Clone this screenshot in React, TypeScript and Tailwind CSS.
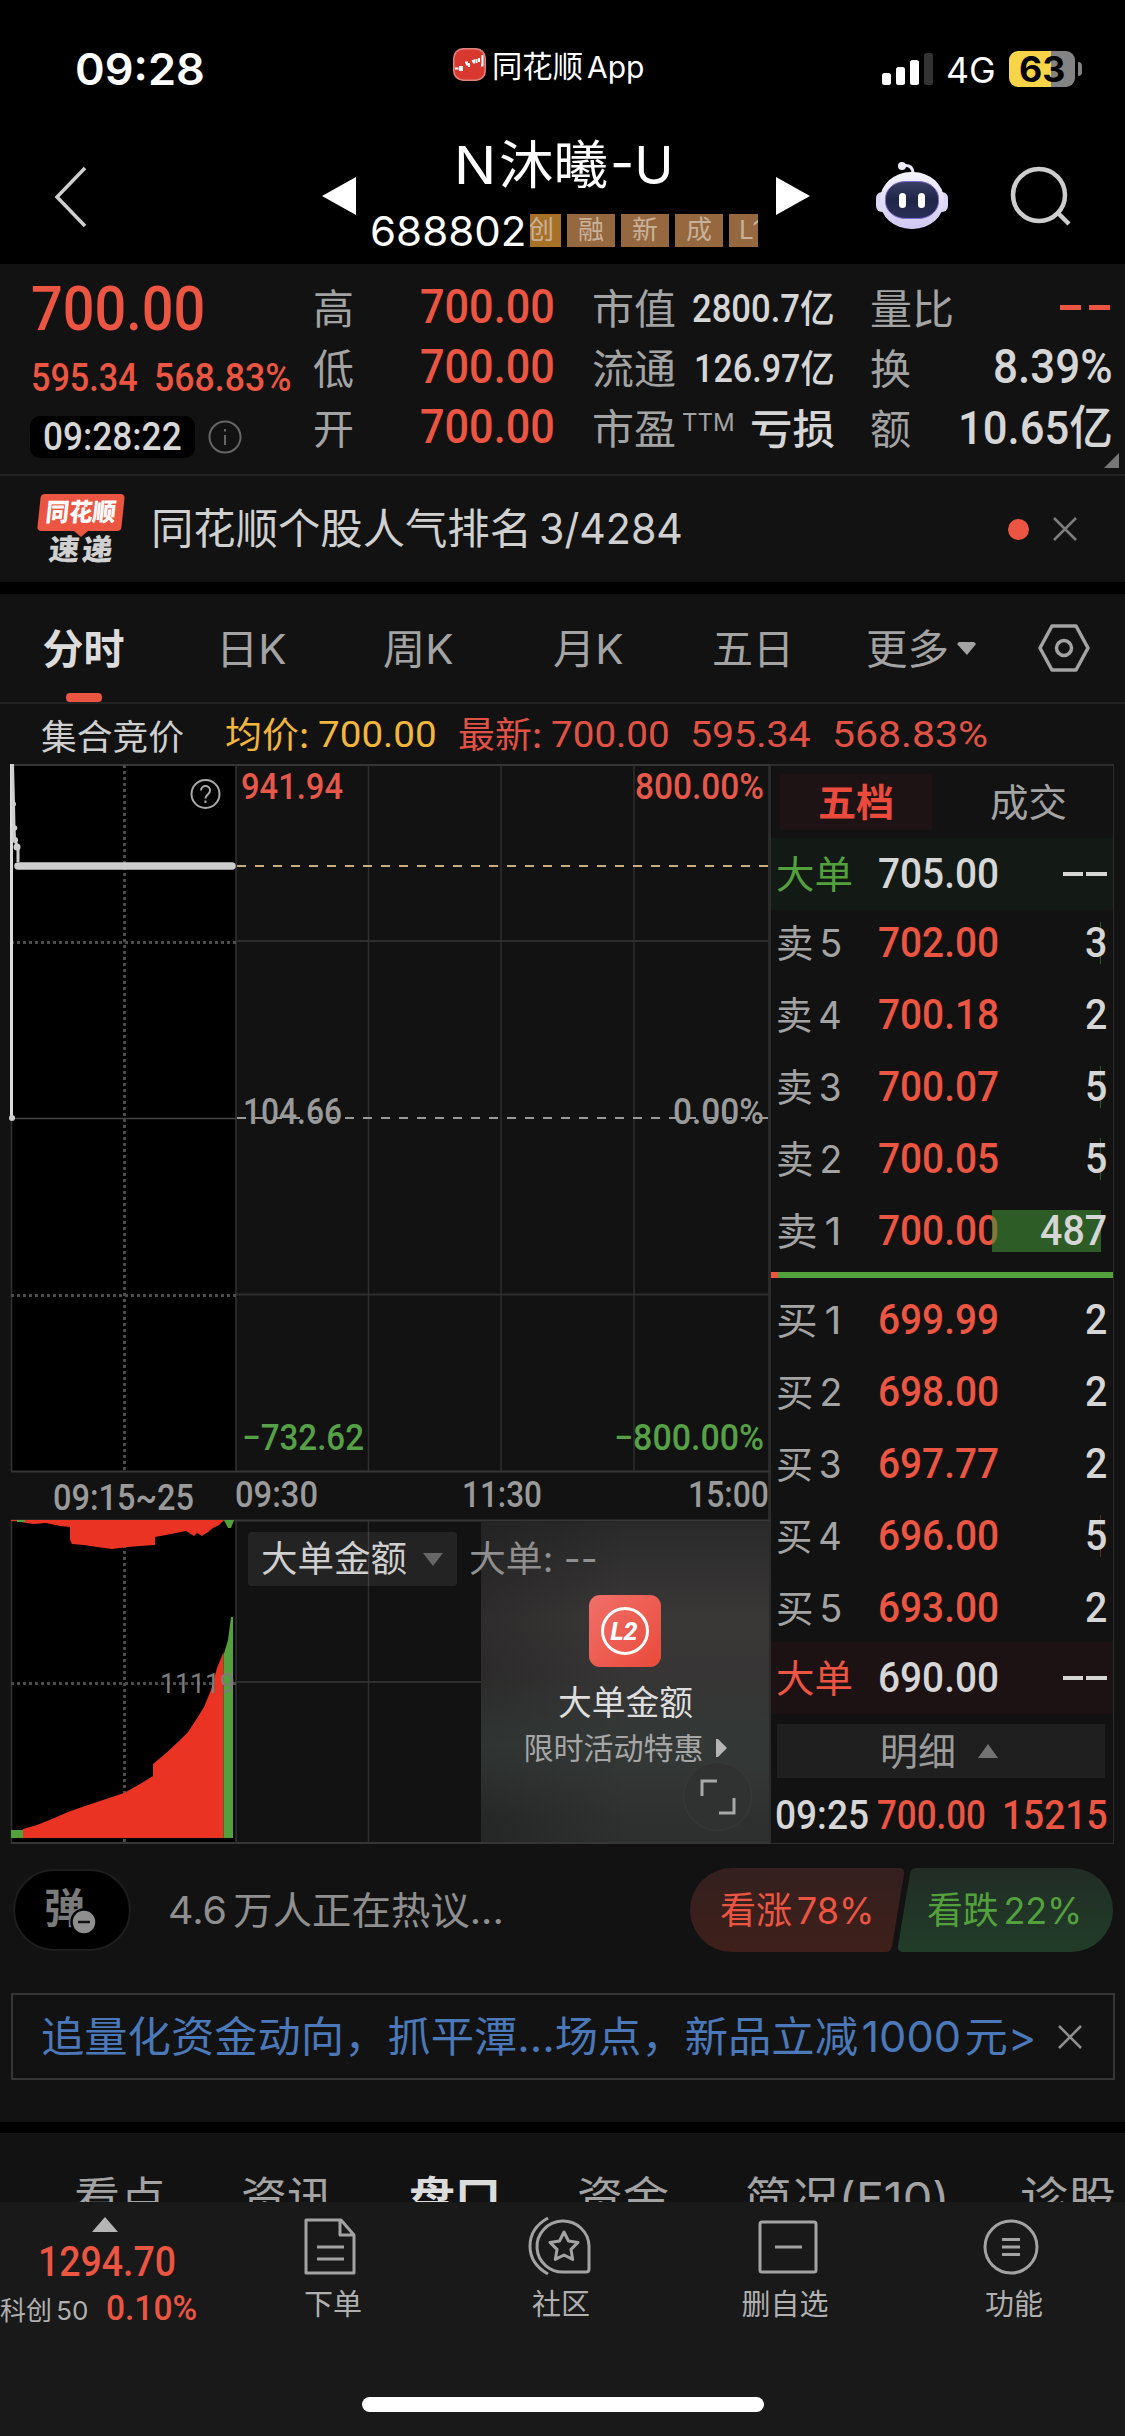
import { useLayoutEffect, useRef, useState, type ReactNode } from "react";

const NUM = "font-['Roboto','Noto_Sans_CJK_SC',sans-serif]";

// Squeezes or stretches a single line of text to an exact width
function Fit({ w, className = "", children }: { w: number; className?: string; children: ReactNode }) {
    const ref = useRef<HTMLSpanElement>(null);
    const [scale, setScale] = useState(1);

    useLayoutEffect(() => {
        if (ref.current) setScale(w / ref.current.offsetWidth);
    }, [w, children]);

    return (
        <span className={`block shrink-0 whitespace-nowrap leading-none ${className}`} style={{ width: w }}>
            <span ref={ref} className="inline-block origin-left" style={{ transform: `scaleX(${scale})` }}>
                {children}
            </span>
        </span>
    );
}

function StatusBar() {
    return (
        <div className="flex h-[136px] items-start">
            <Fit w={130} className="ml-[75px] mt-[47px] text-[44px] font-semibold">09:28</Fit>
            <svg className="ml-[248px] mt-12" width="33" height="33" viewBox="0 0 33 33">
                <rect width="33" height="33" rx="10" fill="#e0837d" />
                <rect x="1.5" y="1.5" width="30" height="30" rx="9" fill="#d8382e" />
                <path d="M2 20.500h3.500M7 18v4h2v-4M12 14.500h2v3M16 15v4M19 13.500l2-1v3M23.500 11v4M26 10v4M29.500 7v10.500h-1.500" fill="none" stroke="#fff" strokeWidth="2" />
            </svg>
            <Fit w={91} className="ml-1.5 mt-[51px] text-[30px]">同花顺</Fit>
            <Fit w={57} className="ml-1 mt-[52px] text-[30px]">App</Fit>
            <svg className="ml-[238px] mt-[53px]" width="52" height="32" viewBox="0 0 52 32">
                <rect x="0" y="20" width="9" height="12" rx="2.500" fill="#fff" />
                <rect x="14" y="14" width="9" height="18" rx="2.500" fill="#fff" />
                <rect x="28" y="7" width="9" height="25" rx="2.500" fill="#fff" />
                <rect x="42" y="0" width="9" height="32" rx="2.500" fill="#333" />
            </svg>
            <Fit w={50} className="ml-3 mt-[53px] text-[35px]">4G</Fit>
            <div className="ml-[13px] mt-[51px] flex h-9 w-[66px] items-center justify-center rounded-[9px] bg-linear-to-r from-[#f8d448] from-63% to-[#838383] to-63% leading-none text-black">
                <Fit w={46} className="text-[35px] font-bold">63</Fit>
            </div>
            <div className="ml-[3px] mt-[62px] h-3.5 w-1 rounded-r-full bg-[#838383]" />
        </div>
    );
}

function Robot() {
    return (
        <svg width="72" height="68" viewBox="0 0 72 68">
            <defs>
                <linearGradient id="shell" x1="0" y1="0" x2="0" y2="1">
                    <stop offset="0" stopColor="#f6f5ff" />
                    <stop offset="1" stopColor="#cfc9f1" />
                </linearGradient>
                <linearGradient id="visor" x1="0" y1="0" x2="0" y2="1">
                    <stop offset="0" stopColor="#3a4063" />
                    <stop offset="0.500" stopColor="#1f2547" />
                    <stop offset="1" stopColor="#2a3158" />
                </linearGradient>
            </defs>
            <path d="M26 4c8-2 11 2 11 8" fill="none" stroke="#e9e7fb" strokeWidth="3" />
            <circle cx="26" cy="4" r="4" fill="#eeecfc" />
            <rect x="0" y="30" width="12" height="20" rx="6" fill="#d9d8f5" />
            <rect x="60" y="30" width="12" height="20" rx="6" fill="#d9d8f5" />
            <rect x="4" y="10" width="64" height="57" rx="31" ry="28" fill="url(#shell)" />
            <rect x="9.500" y="19.500" width="53" height="37" rx="20" ry="17" fill="url(#visor)" stroke="#7a68d6" strokeWidth="1" />
            <rect x="23" y="31" width="7" height="15" rx="3.500" fill="#fff" />
            <rect x="42" y="31" width="7" height="15" rx="3.500" fill="#fff" />
        </svg>
    );
}

function Header() {
    const tags = ["融", "新", "成"];
    return (
        <div className="flex h-32 items-start">
            <svg className="ml-[54px] mt-[30px]" width="34" height="62" viewBox="0 0 34 62">
                <path d="M31 2L3 31l28 29" fill="none" stroke="#cfcfcf" strokeWidth="3.500" />
            </svg>
            <svg className="ml-[234px] mt-[41px]" width="34" height="38" viewBox="0 0 34 38">
                <path d="M34 0v38L0 19z" fill="#fff" />
            </svg>
            <div className="ml-[14px] flex w-[388px] flex-col">
                <div className="mt-px flex h-[58px] items-center pl-[84px] text-[52px]">
                    <Fit w={42}>N</Fit>
                    <Fit w={109} className="ml-[3px]">沐曦</Fit>
                    <Fit w={64} className="ml-0.5">-U</Fit>
                </div>
                <div className="mt-[17px] flex h-9 items-center">
                    <Fit w={156} className="mt-0.5 text-[41px]">688802</Fit>
                    <div className="ml-1 flex w-[228px] gap-1.5 overflow-hidden text-[26px] leading-none text-[#c8b199]">
                        <div className="flex h-[33px] w-[31px] shrink-0 items-center justify-end overflow-hidden bg-[#a87128] pr-[7px]">创</div>
                        {tags.map((t) => (
                            <div key={t} className="flex h-[33px] w-12 shrink-0 items-center justify-center bg-[#96683f]">{t}</div>
                        ))}
                        <div className="flex h-[33px] w-12 shrink-0 items-center bg-[#96683f] pl-2.5">L1</div>
                    </div>
                </div>
            </div>
            <svg className="ml-[18px] mt-[41px]" width="34" height="38" viewBox="0 0 34 38">
                <path d="M0 0v38l34-19z" fill="#fff" />
            </svg>
            <div className="ml-[66px] mt-[26px]">
                <Robot />
            </div>
            <svg className="ml-[62px] mt-7" width="64" height="64" viewBox="0 0 64 64">
                <circle cx="29" cy="31" r="26" fill="none" stroke="#cdcdcd" strokeWidth="4.500" />
                <path d="M48 49l11 11" stroke="#cdcdcd" strokeWidth="4.500" />
            </svg>
        </div>
    );
}

function Quote() {
    return (
        <div className="flex h-[210px] bg-[#121212] text-[#a3a3a3]">
            <div className="ml-[31px] flex w-[264px] flex-col">
                <Fit w={174} className={`mt-[14px] text-[62px] font-medium text-[#eb5541] ${NUM}`}>700.00</Fit>
                <div className={`mt-[19px] flex text-[38px] font-medium text-[#eb5541] ${NUM}`}>
                    <Fit w={107}>595.34</Fit>
                    <Fit w={138} className="ml-4">568.83%</Fit>
                </div>
                <div className="-ml-px mt-[19px] flex items-center">
                    <div className={`flex h-[42px] w-[165px] items-center justify-center rounded-[10px] bg-black text-[38px] font-medium text-[#d6d6d6] ${NUM}`}>
                        <Fit w={139}>09:28:22</Fit>
                    </div>
                    <svg className="ml-3" width="36" height="36" viewBox="0 0 36 36" fill="none" stroke="#666" strokeWidth="2">
                        <circle cx="18" cy="18" r="15.500" />
                        <path d="M18 16v10M18 10v2.500" />
                    </svg>
                </div>
            </div>
            <div className="ml-[18px] mt-[15px] w-[244px]">
                {["高", "低", "开"].map((k) => (
                    <div key={k} className="flex h-[60px] items-center">
                        <Fit w={41} className="text-[41px]">{k}</Fit>
                        <Fit w={135} className={`mb-1 ml-[66px] text-[48px] font-medium text-[#eb5541] ${NUM}`}>700.00</Fit>
                    </div>
                ))}
            </div>
            <div className="ml-[35px] mt-[15px] w-[243px] text-[41px] leading-none">
                <div className="flex h-[60px] items-center justify-between">
                    <Fit w={84}>市值</Fit>
                    <Fit w={143} className={`text-[38px] font-medium text-[#d6d6d6] ${NUM}`}>2800.7亿</Fit>
                </div>
                <div className="flex h-[60px] items-center justify-between">
                    <Fit w={84}>流通</Fit>
                    <Fit w={141} className={`text-[38px] font-medium text-[#d6d6d6] ${NUM}`}>126.97亿</Fit>
                </div>
                <div className="flex h-[60px] items-center">
                    <Fit w={84}>市盈</Fit>
                    <Fit w={53} className="mb-3 ml-1.5 text-[24px]">TTM</Fit>
                    <Fit w={85} className="ml-auto text-[41px] font-medium text-[#d6d6d6]">亏损</Fit>
                </div>
            </div>
            <div className="ml-[35px] mt-[15px] w-[243px] text-[41px] leading-none">
                <div className="flex h-[60px] items-center justify-between">
                    <Fit w={84}>量比</Fit>
                    <svg className="mb-0.5" width="54" height="8" viewBox="0 0 54 8" fill="#eb5541">
                        <rect x="1" y="1" width="21" height="5" />
                        <rect x="30" y="1" width="21" height="5" />
                    </svg>
                </div>
                <div className="flex h-[60px] items-center justify-between">
                    <Fit w={41}>换</Fit>
                    <Fit w={120} className={`mb-1 text-[48px] font-medium text-[#d6d6d6] ${NUM}`}>8.39%</Fit>
                </div>
                <div className="flex h-[60px] items-center justify-between">
                    <Fit w={41}>额</Fit>
                    <Fit w={155} className={`mb-1 text-[47px] font-medium text-[#d6d6d6] ${NUM}`}>10.65亿</Fit>
                </div>
            </div>
            <svg className="-ml-[9px] mt-[189px]" width="15" height="15" viewBox="0 0 15 15">
                <path d="M15 0v15H0z" fill="#777" />
            </svg>
        </div>
    );
}

function NewsBar() {
    return (
        <div className="flex h-[108px] items-center border-t-2 border-[#232323] bg-[#121212]">
            <div className="ml-[37px] flex w-[88px] flex-col items-center">
                <div className="flex h-[37px] w-[84px] -skew-x-6 items-center justify-center rounded-[4px] bg-[#eb5541] text-white">
                    <Fit w={70} className="text-[25px] font-black">同花顺</Fit>
                </div>
                <svg className="-mb-0.5" width="14" height="6" viewBox="0 0 14 6">
                    <path d="M0 0h14L7 6z" fill="#eb5541" />
                </svg>
                <div className="-skew-x-6 text-[#d0d0d0]">
                    <Fit w={64} className="text-[29px] font-black [word-spacing:-0.1em]">速 递</Fit>
                </div>
            </div>
            <Fit w={381} className="ml-[26px] text-[42px] text-[#d0d0d0]">同花顺个股人气排名</Fit>
            <Fit w={144} className="ml-[7px] text-[42px] text-[#d0d0d0]">3/4284</Fit>
            <div className="ml-[325px] size-[21px] rounded-full bg-[#eb5541]" />
            <svg className="ml-6" width="24" height="24" viewBox="0 0 24 24">
                <path d="M1 1l22 22M23 1L1 23" stroke="#7d7d7d" strokeWidth="2.500" />
            </svg>
        </div>
    );
}

function PeriodTabs() {
    return (
        <div className="mt-3 flex h-[110px] items-center border-b-2 border-[#232323] bg-[#121212] text-[41px] leading-none text-[#a3a3a3]">
            <div className="ml-[42px] flex h-full w-[83px] flex-col items-center justify-end text-[#dcdcdc]">
                <Fit w={82} className="mb-[23px] font-bold">分时</Fit>
                <div className="h-[9px] w-9 rounded-[4px] bg-[#eb5541]" />
            </div>
            <Fit w={71} className="ml-[91px] mt-0.5">日K</Fit>
            <Fit w={71} className="ml-24 mt-0.5">周K</Fit>
            <Fit w={71} className="ml-[99px] mt-0.5">月K</Fit>
            <Fit w={82} className="ml-[88px] mt-0.5">五日</Fit>
            <Fit w={83} className="ml-[72px] mt-0.5">更多</Fit>
            <svg className="ml-2" width="19" height="13" viewBox="0 0 19 13">
                <path d="M2 0h15l2 2-9 11L0 2z" fill="#a3a3a3" />
            </svg>
            <svg className="ml-[61px]" width="54" height="48" viewBox="0 0 54 48" fill="none" stroke="#a3a3a3" strokeWidth="3.500">
                <path d="M15 2h24l12 22-12 22H15L3 24z" strokeLinejoin="round" />
                <circle cx="27" cy="24" r="7.500" />
            </svg>
        </div>
    );
}

function PriceLine() {
    return (
        <div className="flex h-[60px] items-center bg-[#121212] pt-0.5 text-[36px] leading-none text-[#e25244]">
            <Fit w={143} className="ml-[41px] mt-1 text-[35px] text-[#cfcfcf]">集合竞价</Fit>
            <Fit w={84} className="ml-[41px] text-[#f2b63c]">均价:</Fit>
            <Fit w={119} className={`ml-[9px] text-[#f2b63c] ${NUM}`}>700.00</Fit>
            <Fit w={84} className="ml-[21px]">最新:</Fit>
            <Fit w={119} className={`ml-[9px] ${NUM}`}>700.00</Fit>
            <Fit w={121} className={`ml-[20px] ${NUM}`}>595.34</Fit>
            <Fit w={156} className={`ml-[21px] ${NUM}`}>568.83%</Fit>
        </div>
    );
}

type LabelProps = { x: number; y: number; w: number; fill: string; children: string };

function AxisLabel({ x, y, w, fill, children }: LabelProps) {
    return (
        <text x={x} y={y} fill={fill} fontSize="36" fontFamily="Roboto, sans-serif" fontWeight="500" textLength={w} lengthAdjust="spacingAndGlyphs">
            {children}
        </text>
    );
}

function Chart() {
    return (
        <div className="relative h-[1080px] w-[770px] shrink-0">
            <svg className="block" width="770" height="1080" viewBox="0 764 770 1080">
                <rect x="11" y="765" width="225" height="706" fill="#000" />
                <rect x="11" y="1521" width="225" height="322" fill="#000" />
                <g stroke="#2e2e2e" strokeWidth="1.500" fill="none">
                    <path d="M11 765H770M11 1471.500H770M11 1520.500H770M11 1843H770" stroke="#363636" strokeWidth="2" />
                    <path d="M11.500 765V1471M11.500 1521V1843M236 765V1471M236 1521V1843M769 765V1843" stroke="#333" />
                    <path d="M368.500 765V1471M501 765V1471M634 765V1471M368.500 1521V1843" />
                    <path d="M236 941H769M236 1294.500H769M236 1682H482" strokeWidth="2" />
                    <path d="M11 1118.500H236" stroke="#444" />
                </g>
                <g stroke="#4c4c4c" strokeWidth="3" strokeDasharray="3 3" fill="none">
                    <path d="M11 942.500H236M11 1295.500H236M11 1683.500H236" />
                    <path d="M124.500 765V1471M124.500 1521V1843" />
                </g>
                <path d="M237 866H768" stroke="#c9ad7c" strokeWidth="2" strokeDasharray="9 9" />
                <path d="M237 1118H768" stroke="#999" strokeWidth="2" strokeDasharray="9 9" />
                <path d="M11.500 764V1118" stroke="#dcdcdc" strokeWidth="3" />
                <path d="M12.500 764L13.500 803L14 828L14.500 838L17 846L18 850L18 862" stroke="#cfcfcf" strokeWidth="3" fill="none" />
                <g fill="#cfcfcf">
                    <circle cx="13.500" cy="804" r="2.500" />
                    <circle cx="14.500" cy="828" r="2.800" />
                    <circle cx="15" cy="840" r="3" />
                    <circle cx="17" cy="847" r="3.500" />
                    <circle cx="12" cy="1118" r="3" />
                </g>
                <path d="M18 866H232" stroke="#cdcdcd" strokeWidth="7.500" strokeLinecap="round" />

                <g fill="none" stroke="#aaa" strokeWidth="2">
                    <circle cx="205.500" cy="794" r="14" />
                    <path d="M201 790.500c0-6 9-6 9 0 0 4-4.500 4-4.500 8M205.500 800.500v2.500" />
                </g>

                <AxisLabel x={241} y={799} w={102} fill="#e8584a">941.94</AxisLabel>
                <AxisLabel x={635} y={799} w={129} fill="#e8584a">800.00%</AxisLabel>
                <AxisLabel x={243} y={1124} w={99} fill="#9a9a9a">104.66</AxisLabel>
                <AxisLabel x={673} y={1124} w={91} fill="#9a9a9a">0.00%</AxisLabel>
                <AxisLabel x={242} y={1450} w={122} fill="#56a045">−732.62</AxisLabel>
                <AxisLabel x={614} y={1450} w={150} fill="#56a045">−800.00%</AxisLabel>
                <AxisLabel x={53} y={1510} w={141} fill="#9a9a9a">09:15~25</AxisLabel>
                <AxisLabel x={235} y={1507} w={83} fill="#9a9a9a">09:30</AxisLabel>
                <AxisLabel x={462} y={1507} w={80} fill="#9a9a9a">11:30</AxisLabel>
                <AxisLabel x={688} y={1507} w={81} fill="#9a9a9a">15:00</AxisLabel>

                {/* auction volume */}
                <path d="M11 1520H224L219 1525L213 1528L208 1532L202 1536L197 1533L194 1536L186 1531L176 1533L166 1535L155 1537V1545L140 1546L128 1547L112 1549L97 1547L84 1545L72 1544L70 1540V1527L60 1526L46 1523L34 1524L26 1523L18 1521H11z" fill="#ea3323" />
                <path d="M17 1520h8v2h-8zM224 1520h10l-3 8h-3z" fill="#53a13c" />
                <path d="M23 1838V1829L37 1825L52 1819L68 1812L85 1806L100 1801L124 1793L140 1784L153 1776V1764L165 1754L178 1742L188 1732L194 1723L204 1707L211 1690L217 1668L223.500 1652V1838z" fill="#ea3323" />
                <path d="M11 1838v-8h12v8zM223.500 1838V1655L228 1640L231 1617H233V1838z" fill="#53a13c" />
                <text x="160" y="1693" fill="#7c7c7c" fontSize="28" fontFamily="Roboto, sans-serif" textLength="75" lengthAdjust="spacingAndGlyphs">11119</text>
            </svg>

            <div className="absolute left-[481px] top-[758px] flex h-[320px] w-[288px] flex-col items-center bg-linear-to-b from-[#2a2a2a] via-[#3a3737] via-30% to-[#2e2f2f]">
                <div className="absolute inset-0 bg-linear-to-r from-[#121212]/30 to-transparent to-50%" />
                <div className="absolute inset-x-0 bottom-6 top-[150px] bg-linear-to-b from-transparent via-[#333d39]/60 to-transparent" />
                <svg className="relative mt-[73px]" width="72" height="72" viewBox="0 0 72 72">
                    <defs>
                        <linearGradient id="l2" x1="0" y1="0" x2="1" y2="1">
                            <stop offset="0" stopColor="#f0706a" />
                            <stop offset="1" stopColor="#ea4a3a" />
                        </linearGradient>
                    </defs>
                    <rect width="72" height="72" rx="11" fill="url(#l2)" />
                    <circle cx="36" cy="36" r="22.500" fill="none" stroke="#fff" strokeWidth="3" />
                    <text x="35" y="45" textAnchor="middle" fill="#fff" fontSize="25" fontWeight="800" fontStyle="italic" fontFamily="Roboto, sans-serif">L2</text>
                </svg>
                <Fit w={135} className="relative mt-[19px] text-[34px] text-[#dedede]">大单金额</Fit>
                <div className="relative mt-[13px] flex items-center">
                    <Fit w={180} className="text-[30px] text-[#a6a6a6]">限时活动特惠</Fit>
                    <svg className="ml-3" width="11" height="18" viewBox="0 0 11 18">
                        <path d="M0 0h2l9 9-9 9H0z" fill="#b5b5b5" />
                    </svg>
                </div>
                <div className="absolute left-[202px] top-[240px] flex size-[69px] items-center justify-center rounded-full border border-[#3a3a3a] bg-[#303131]">
                    <svg width="36" height="36" viewBox="0 0 36 36" fill="none" stroke="#a8a8a8" strokeWidth="3">
                        <path d="M2 17V2h15M34 19v15H19" />
                    </svg>
                </div>
            </div>
            <div className="absolute left-[248px] top-[768px] flex h-[54px] items-center text-[36px]">
                <div className="flex h-full w-[209px] items-center rounded-[4px] bg-white/7 pl-[13px] text-[#cfcfcf]">
                    <Fit w={146}>大单金额</Fit>
                    <svg className="ml-4" width="20" height="13" viewBox="0 0 20 13">
                        <path d="M0 0h20L10 13z" fill="#666" />
                    </svg>
                </div>
                <Fit w={129} className="ml-3 text-[#8f8f8f]">大单: --</Fit>
            </div>
        </div>
    );
}

// bar is the depth bar's width in px
type Level = { name: string; price: string; qty: string; bar: number };

const sells: Level[] = [
    { name: "卖 5", price: "702.00", qty: "3", bar: 1 },
    { name: "卖 4", price: "700.18", qty: "2", bar: 0 },
    { name: "卖 3", price: "700.07", qty: "5", bar: 1 },
    { name: "卖 2", price: "700.05", qty: "5", bar: 1 },
    { name: "卖 1", price: "700.00", qty: "487", bar: 109 },
];

const buys: Level[] = [
    { name: "买 1", price: "699.99", qty: "2", bar: 0 },
    { name: "买 2", price: "698.00", qty: "2", bar: 0 },
    { name: "买 3", price: "697.77", qty: "2", bar: 0 },
    { name: "买 4", price: "696.00", qty: "5", bar: 1 },
    { name: "买 5", price: "693.00", qty: "2", bar: 0 },
];

function LevelRow({ level, barClass }: { level: Level; barClass: string }) {
    return (
        <div className="relative flex h-[72px] items-center">
            <Fit w={66} className="ml-[5px] text-[38px] text-[#a3a3a3] [word-spacing:-0.12em]">{level.name}</Fit>
            <Fit w={121} className={`ml-9 text-[42px] font-medium text-[#eb5541] ${NUM}`}>{level.price}</Fit>
            <div className={`absolute right-[12px] top-[15px] h-[42px] ${barClass}`} style={{ width: level.bar }} />
            <Fit w={level.qty.length * 22.5} className={`relative ml-auto mr-1.5 text-[42px] font-medium text-[#d6d6d6] ${NUM}`}>{level.qty}</Fit>
        </div>
    );
}

function BigOrderRow({ className, price }: { className: string; price: string }) {
    return (
        <div className={`flex h-[72px] items-center ${className}`}>
            <Fit w={77} className="ml-[5px] text-[38px]">大单</Fit>
            <Fit w={121} className={`ml-[25px] text-[42px] font-medium text-[#d6d6d6] ${NUM}`}>{price}</Fit>
            <svg className="ml-auto mr-1.5" width="44" height="4" viewBox="0 0 44 4" fill="#d6d6d6">
                <rect width="20" height="4" />
                <rect x="23" width="21" height="4" />
            </svg>
        </div>
    );
}

function OrderBook() {
    return (
        <div className="h-[1080px] w-[344px] border border-t-2 border-[#2c2c2c]">
            <div className="flex h-[72px] items-center pl-[9px] leading-none">
                <div className="flex h-14 w-[152px] items-center justify-center bg-[#1e1314] text-[#eb4a3c]">
                    <Fit w={76} className="mb-px text-[38px] font-bold">五档</Fit>
                </div>
                <Fit w={77} className="mb-px ml-[58px] text-[38px] text-[#a3a3a3]">成交</Fit>
            </div>
            <BigOrderRow className="bg-[#131a16] text-[#53a13c]" price="705.00" />
            <div className="-mt-[3px] h-[365px]">
                {sells.map((l) => <LevelRow key={l.name} level={l} barClass="bg-[#418d33]/60" />)}
            </div>
            <div className="flex h-1.5 bg-[#53a13c]">
                <div className="h-full w-[7px] bg-[#eb5541]" />
            </div>
            <div className="mt-1.5 h-[358px]">
                {buys.map((l) => <LevelRow key={l.name} level={l} barClass="bg-[#a03a34]/60" />)}
            </div>
            <BigOrderRow className="bg-[#1d1213] text-[#eb5541]" price="690.00" />
            <div className="ml-1.5 mt-2.5 flex h-[54px] w-[328px] items-center bg-[#1f1f1f] pl-[103px] text-[#9a9a9a]">
                <Fit w={76} className="text-[38px]">明细</Fit>
                <svg className="ml-[22px]" width="20" height="14" viewBox="0 0 20 14">
                    <path d="M10 0l10 14H0z" fill="#737373" />
                </svg>
            </div>
            <div className={`flex h-[68px] items-center pt-1.5 text-[41px] font-medium text-[#eb5541] ${NUM}`}>
                <Fit w={94} className="ml-1 text-[#d6d6d6]">09:25</Fit>
                <Fit w={109} className="ml-2">700.00</Fit>
                <Fit w={106} className="ml-[16px]">15215</Fit>
            </div>
        </div>
    );
}

function Discuss() {
    return (
        <div className="flex h-[149px] items-start">
            <div className="relative ml-[13px] mt-[25px] flex h-[82px] w-[118px] items-center rounded-full border-2 border-[#1d1d1d] bg-black pl-[29px]">
                <span className="pb-1 text-[41px] font-bold leading-none text-[#7a7a7a]">弹</span>
                <svg className="absolute left-[55px] top-[37px]" width="28" height="28" viewBox="0 0 28 28">
                    <circle cx="14" cy="14" r="12.500" fill="#8f8f8f" stroke="#000" strokeWidth="2.500" />
                    <path d="M8 14h12" stroke="#111" strokeWidth="2.500" />
                </svg>
            </div>
            <Fit w={336} className="ml-[37px] mt-[47px] text-[38px] text-[#8f8f8f] [word-spacing:-0.12em]">4.6 万人正在热议...</Fit>
            <div className="relative ml-[186px] mt-6 h-[84px] w-[424px]">
                <svg className="block" width="424" height="84" viewBox="0 0 424 84">
                    <defs>
                        <linearGradient id="up" x1="0" y1="0" x2="0" y2="1">
                            <stop offset="0" stopColor="#33201f" />
                            <stop offset="1" stopColor="#3f1f1a" />
                        </linearGradient>
                        <linearGradient id="down" x1="0" y1="0" x2="0" y2="1">
                            <stop offset="0" stopColor="#212c25" />
                            <stop offset="1" stopColor="#213d29" />
                        </linearGradient>
                    </defs>
                    <path d="M42 0H209q6 0 5 6L202 78q-1 6-7 6H42A42 42 0 0 1 42 0z" fill="url(#up)" />
                    <path d="M226 0H381A42 42 0 0 1 381 84H213q-6 0-5-6L220 6q1-6 6-6z" fill="url(#down)" />
                </svg>
                <div className="absolute inset-0 flex items-center pl-[30px] text-[37px] [word-spacing:-0.15em]">
                    <Fit w={155} className="text-[#eb5541]">看涨 78%</Fit>
                    <Fit w={155} className="ml-[52px] text-[#53a13c]">看跌 22%</Fit>
                </div>
            </div>
        </div>
    );
}

function Promo() {
    return (
        <div className="mx-[11px] flex h-[87px] w-[1104px] items-center border-2 border-[#363636] text-[42px] text-[#4a78b8]">
            <Fit w={995} className="ml-[28px] [word-spacing:-0.2em]">追量化资金动向，抓平潭...场点，新品立减 1000 元&gt;</Fit>
            <svg className="ml-[22px]" width="24" height="24" viewBox="0 0 24 24">
                <path d="M1 1l22 22M23 1L1 23" stroke="#8f8f8f" strokeWidth="2.500" />
            </svg>
        </div>
    );
}

function SectionTabs() {
    return (
        <div className="mt-[11px] flex h-[69px] items-start overflow-hidden bg-[#121212] pt-[43px] text-[43px] text-[#a3a3a3]">
            <Fit w={92} className="ml-[74px]">看点</Fit>
            <Fit w={92} className="ml-[75px]">资讯</Fit>
            <Fit w={92} className="ml-[76px] font-bold text-[#dcdcdc]">盘口</Fit>
            <Fit w={92} className="ml-[76px]">资金</Fit>
            <Fit w={204} className="ml-[76px]">简况(F10)</Fit>
            <Fit w={96} className="ml-[71px]">诊股</Fit>
        </div>
    );
}

function BottomBar() {
    const stroke = { fill: "none", stroke: "#a3a3a3", strokeWidth: 3 };
    return (
        <div className="flex h-[234px] flex-col items-center bg-[#191919] text-[#b0b0b0]">
            <div className="flex h-[195px] w-full items-start">
                <div className="flex w-[219px] shrink-0 flex-col">
                    <svg className="ml-[92px] mt-[15px]" width="26" height="15" viewBox="0 0 26 15">
                        <path d="M13 0l13 15H0z" fill="#b5b5b5" />
                    </svg>
                    <Fit w={138} className={`ml-[38px] mt-[9px] text-[42px] font-medium text-[#eb5541] ${NUM}`}>1294.70</Fit>
                    <div className="mt-2 flex items-center">
                        <Fit w={88} className="mt-1 text-[26px] [word-spacing:-0.12em]">科创 50</Fit>
                        <Fit w={91} className={`ml-[18px] text-[35px] font-medium text-[#eb5541] ${NUM}`}>0.10%</Fit>
                    </div>
                </div>
                <div className="flex w-[228px] shrink-0 flex-col items-center pt-[14px] text-[29px] leading-none">
                    <svg className="mr-1" width="56" height="60" viewBox="0 0 56 60" {...stroke}>
                        <path d="M3 4h35l13 15v38H3zM37 4v15h14M14 31h27M14 43h27" strokeLinejoin="round" />
                    </svg>
                    <span className="mt-[14px]">下单</span>
                </div>
                <div className="flex w-[228px] shrink-0 flex-col items-center pt-[14px] text-[29px] leading-none">
                    <svg className="mr-1" width="64" height="60" viewBox="0 0 64 60" {...stroke}>
                        <path d="M38 56A26 25.500 0 1 1 62 30V53q0 3-3 3zM21 2Q3 12 3 30t18 28" strokeLinejoin="round" />
                        <path d="M37 16l4.500 9 9.500 1.400-7 7 1.700 10L37 39l-8.700 4.400L30 33.400l-7-7 9.500-1.400z" strokeLinejoin="round" />
                    </svg>
                    <span className="mt-[14px]">社区</span>
                </div>
                <div className="flex w-[220px] shrink-0 flex-col items-center pt-[14px] text-[29px] leading-none">
                    <svg className="ml-1.5" width="60" height="60" viewBox="0 0 60 60" {...stroke}>
                        <rect x="2" y="6" width="56" height="50" rx="2" />
                        <path d="M17 31h27" />
                    </svg>
                    <span className="mt-[14px]">删自选</span>
                </div>
                <div className="flex w-[230px] shrink-0 flex-col items-center pl-2 pt-[14px] text-[29px] leading-none">
                    <svg className="mr-0.5" width="60" height="60" viewBox="0 0 60 60" {...stroke}>
                        <circle cx="28" cy="31" r="26" />
                        <path d="M19 23.500h18M19 31h18M19 38.500h18" />
                    </svg>
                    <span className="mt-[14px]">功能</span>
                </div>
            </div>
            <div className="h-[15px] w-[402px] rounded-full bg-white" />
        </div>
    );
}

export default function App() {
    return (
        <div className="h-[2436px] w-[1125px] overflow-hidden bg-black font-['Inter','Noto_Sans_CJK_SC',sans-serif] text-white">
            <StatusBar />
            <Header />
            <Quote />
            <NewsBar />
            <PeriodTabs />
            <PriceLine />
            <div className="h-[1358px] bg-[#121212]">
                <div className="flex">
                    <Chart />
                    <OrderBook />
                </div>
                <Discuss />
                <Promo />
            </div>
            <SectionTabs />
            <BottomBar />
        </div>
    );
}
